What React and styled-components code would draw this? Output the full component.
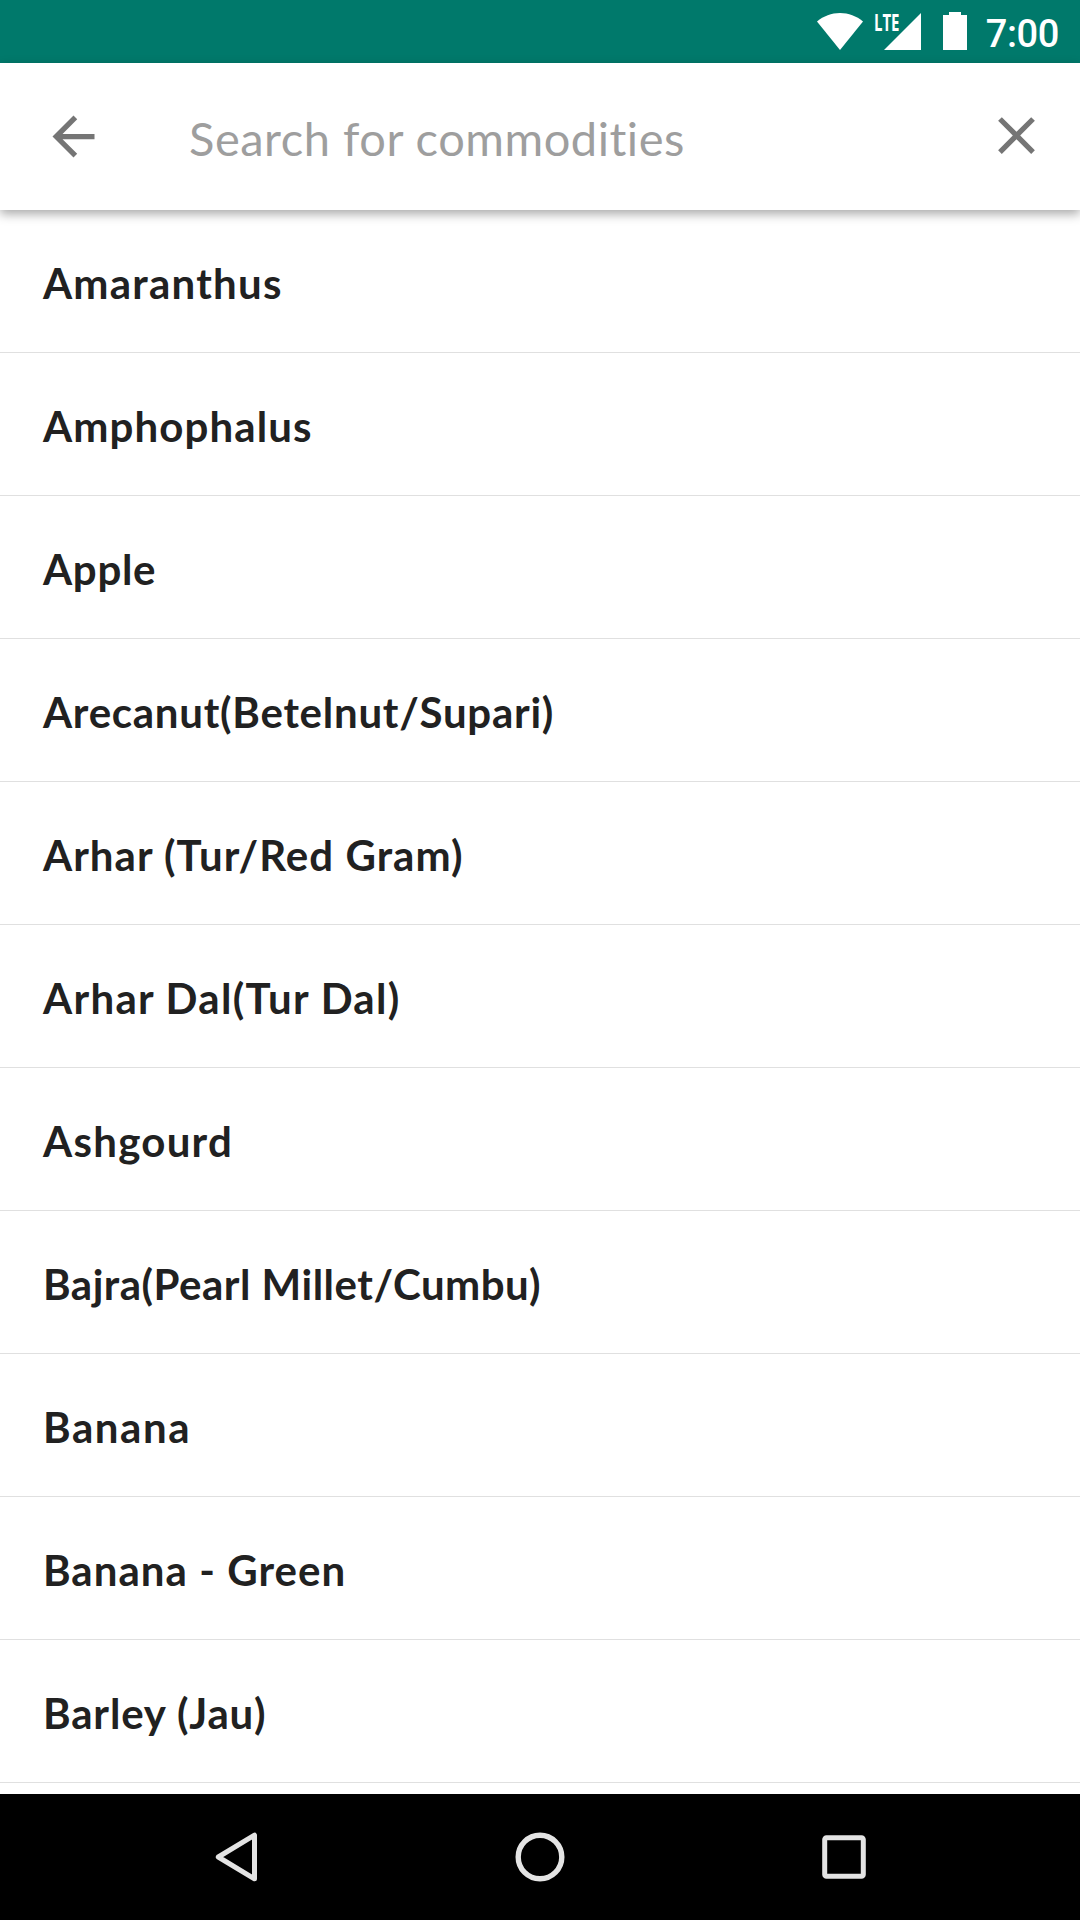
import React from 'react';
import styled, { createGlobalStyle } from 'styled-components';

const GlobalStyle = createGlobalStyle`
  body {
    margin: 0;
    background: #ffffff;
  }
`;

const Screen = styled.div`
  display: flex;
  flex-direction: column;
  width: 1080px;
  height: 1920px;
  overflow: hidden;
  background: #ffffff;
  font-family: Lato, 'Open Sans', sans-serif;
`;

const StatusBar = styled.header`
  flex: none;
  display: flex;
  justify-content: flex-end;
  align-items: flex-start;
  box-sizing: border-box;
  height: 63px;
  padding: 12px 21px 0 0;
  background: #00796b;
  color: #ffffff;
`;

const StatusIcon = styled.svg`
  display: block;
  flex: none;
  fill: currentColor;
`;

const Signal = styled.div`
  position: relative;
  margin: 0 22px 0 12px;
`;

const NetworkLabel = styled.span`
  position: absolute;
  left: -1px;
  top: 1px;
  font: 700 23px/18px 'Open Sans', sans-serif;
  transform: scaleX(0.65);
  transform-origin: left center;
`;

const Clock = styled.time`
  margin-left: 19px;
  font: 500 38px/44px Roboto, sans-serif;
  letter-spacing: -0.4px;
`;

const SearchBar = styled.div`
  flex: none;
  position: relative;
  display: flex;
  align-items: center;
  box-sizing: border-box;
  height: 147px;
  padding: 0 32px 0 42px;
  background: #ffffff;
  box-shadow: 0 4px 10px rgba(0, 0, 0, 0.34);
`;

const IconButton = styled.button`
  flex: none;
  display: flex;
  padding: 0 0 ${({ $lift = 0 }) => $lift}px;
  border: 0;
  background: none;
  color: #757575;
`;

const SearchInput = styled.div`
  flex: 1;
  padding: 2px 0 0 84px;
  color: #9e9e9e;
  font-size: 47px;
  line-height: 60px;
  letter-spacing: 0.52px;
  white-space: nowrap;
`;

const List = styled.ul`
  flex: 1;
  min-height: 0;
  margin: 0;
  padding: 0;
  overflow: hidden;
  list-style: none;
`;

const Row = styled.li`
  box-sizing: border-box;
  height: 143px;
  padding: 48px 43px 0;
  border-bottom: 1px solid #e0e0e0;
  color: #212121;
  font-size: 42px;
  font-weight: 700;
  line-height: 50px;
  letter-spacing: ${({ $tracking }) => $tracking}px;
  white-space: nowrap;
`;

const NavBar = styled.nav`
  flex: none;
  display: grid;
  grid-template-columns: repeat(3, 304px);
  justify-content: center;
  align-items: center;
  height: 126px;
  background: #000000;
`;

const NavButton = styled.button`
  display: flex;
  justify-content: center;
  padding: 0;
  border: 0;
  background: none;
  color: #e4e4e4;
`;

const NavIcon = styled.svg`
  display: block;
  fill: none;
  stroke: currentColor;
`;

const commodities = [
  { name: 'Amaranthus', tracking: 1.24 },
  { name: 'Amphophalus', tracking: 1.1 },
  { name: 'Apple', tracking: 0.7 },
  { name: 'Arecanut(Betelnut/Supari)', tracking: 0.74 },
  { name: 'Arhar (Tur/Red Gram)', tracking: 1.04 },
  { name: 'Arhar Dal(Tur Dal)', tracking: 1.3 },
  { name: 'Ashgourd', tracking: 1.28 },
  { name: 'Bajra(Pearl Millet/Cumbu)', tracking: 0.5 },
  { name: 'Banana', tracking: 1.6 },
  { name: 'Banana - Green', tracking: 1.05 },
  { name: 'Barley (Jau)', tracking: 0.86 },
];

export default function App() {
  return (
    <>
      <GlobalStyle />
      <Screen>
        <StatusBar>
          <StatusIcon width="46" height="38" viewBox="0 0 46 38">
            <path d="M0 9.5C6.5 4 14.5 1 23 1s16.500 3 23 8.500L23 38z" />
          </StatusIcon>
          <Signal>
            <StatusIcon width="46" height="38" viewBox="0 0 46 38">
              <path d="M46 1v37H9z" />
            </StatusIcon>
            <NetworkLabel>LTE</NetworkLabel>
          </Signal>
          <StatusIcon width="24" height="38" viewBox="0 0 24 38">
            <path d="M6 0h12v3h6v35H0V3h6z" />
          </StatusIcon>
          <Clock>7:00</Clock>
        </StatusBar>

        <SearchBar>
          <IconButton aria-label="Back">
            <svg width="63" height="63" viewBox="0 0 24 24" fill="currentColor">
              <path d="M20 11H7.830l5.590-5.590L12 4l-8 8 8 8 1.410-1.410L7.830 13H20v-2z" />
            </svg>
          </IconButton>
          <SearchInput>Search for commodities</SearchInput>
          <IconButton aria-label="Clear" $lift={2}>
            <svg width="63" height="63" viewBox="0 0 24 24" fill="currentColor">
              <path d="M19 6.410 17.590 5 12 10.590 6.410 5 5 6.410 10.590 12 5 17.590 6.410 19 12 13.410 17.590 19 19 17.590 13.410 12z" />
            </svg>
          </IconButton>
        </SearchBar>

        <List>
          {commodities.map(({ name, tracking }) => (
            <Row key={name} $tracking={tracking}>
              {name}
            </Row>
          ))}
        </List>

        <NavBar>
          <NavButton aria-label="Back">
            <NavIcon width="50" height="50" viewBox="0 0 50 50">
              <path
                d="M43.500 3.200v43.600L7.300 25z"
                strokeWidth="5"
                strokeLinejoin="round"
              />
            </NavIcon>
          </NavButton>
          <NavButton aria-label="Home">
            <NavIcon width="50" height="50" viewBox="0 0 50 50">
              <circle cx="25" cy="25" r="21.800" strokeWidth="5.400" />
            </NavIcon>
          </NavButton>
          <NavButton aria-label="Overview">
            <NavIcon width="50" height="50" viewBox="0 0 50 50">
              <rect x="5.700" y="5.700" width="38.600" height="38.600" rx="1.800" strokeWidth="5" />
            </NavIcon>
          </NavButton>
        </NavBar>
      </Screen>
    </>
  );
}
